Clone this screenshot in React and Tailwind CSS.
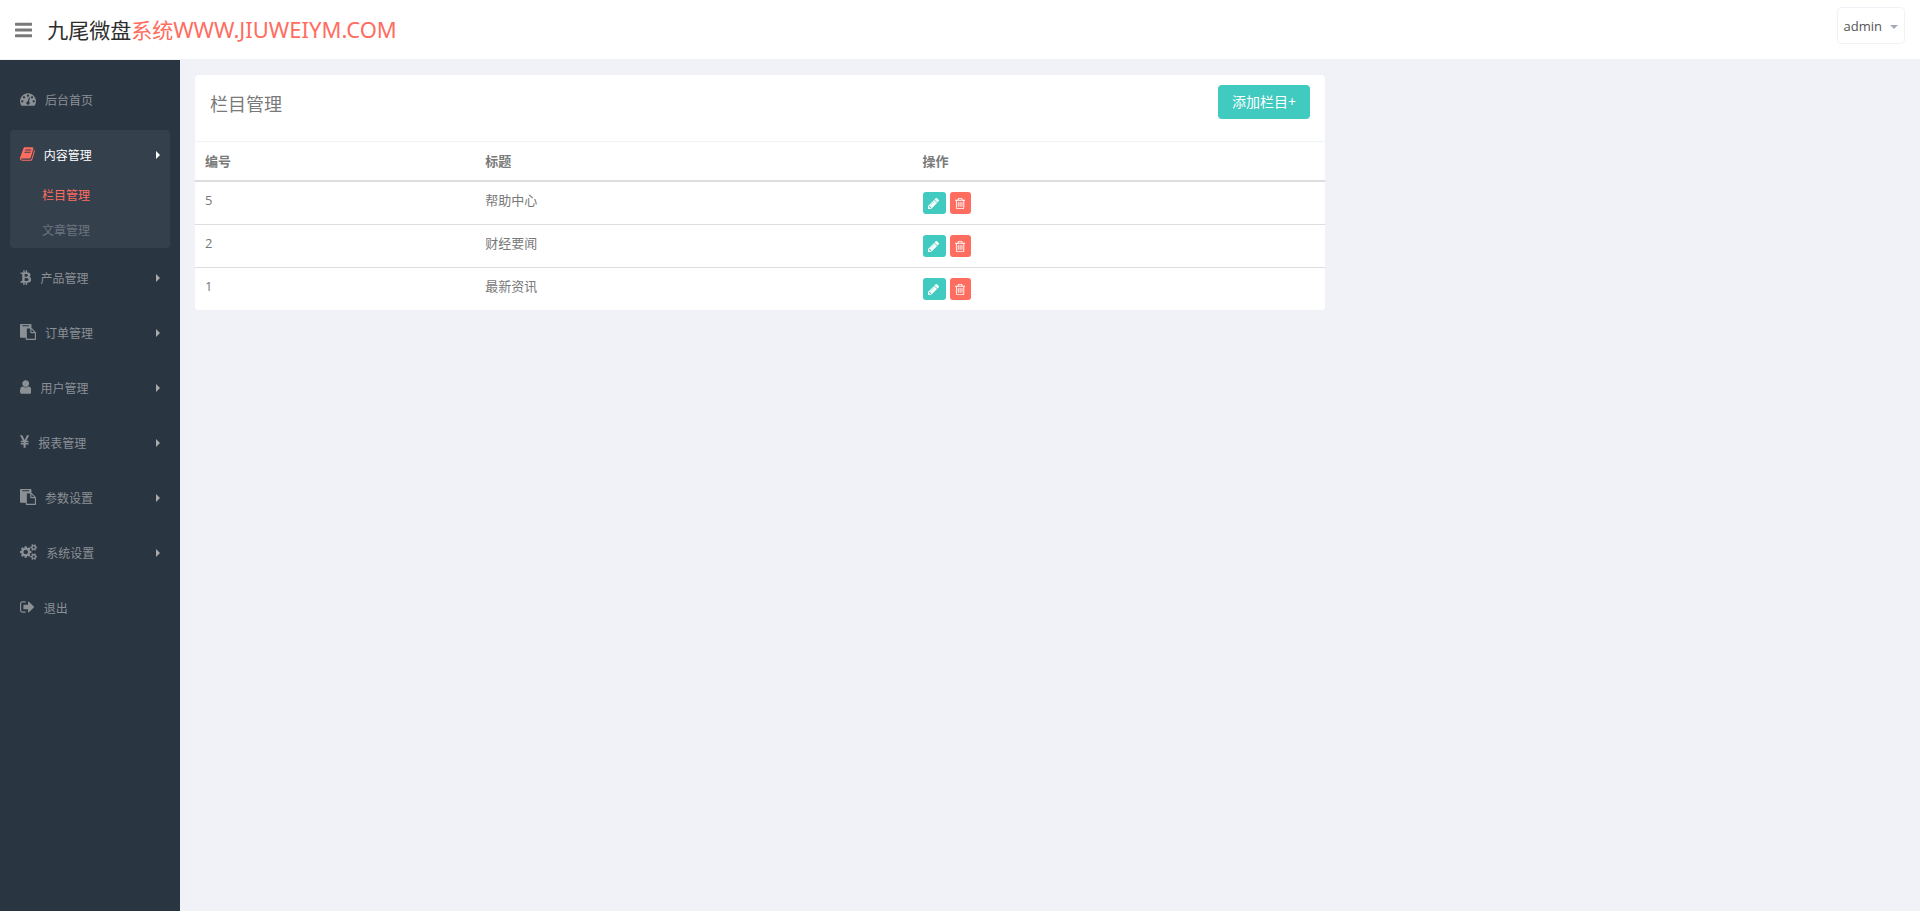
import React, { useState } from "react";

const icons = {
  bars: {
    box: "128 0 1536 1792",
    d: "M1664 1344v128q0 26-19 45t-45 19h-1408q-26 0-45-19t-19-45v-128q0-26 19-45t45-19h1408q26 0 45 19t19 45zm0-512v128q0 26-19 45t-45 19h-1408q-26 0-45-19t-19-45v-128q0-26 19-45t45-19h1408q26 0 45 19t19 45zm0-512v128q0 26-19 45t-45 19h-1408q-26 0-45-19t-19-45v-128q0-26 19-45t45-19h1408q26 0 45 19t19 45z",
  },
  dashboard: {
    box: "0 0 1792 1792",
    d: "M384 1152q0-53-37.5-90.5t-90.5-37.5-90.5 37.5-37.5 90.5 37.5 90.5 90.5 37.5 90.5-37.5 37.5-90.5zm192-448q0-53-37.5-90.5t-90.5-37.5-90.5 37.5-37.5 90.5 37.5 90.5 90.5 37.5 90.5-37.5 37.5-90.5zm428 481l101-382q6-26-7.5-48.5t-38.5-29.5-48 6.5-30 39.5l-101 382q-60 5-107 43.5t-63 98.5q-20 77 20 146t117 89 146-20 89-117q16-60-6-117t-72-91zm660-33q0-53-37.5-90.5t-90.5-37.5-90.5 37.5-37.5 90.5 37.5 90.5 90.5 37.5 90.5-37.5 37.5-90.5zm-640-640q0-53-37.5-90.5t-90.5-37.5-90.5 37.5-37.5 90.5 37.5 90.5 90.5 37.5 90.5-37.5 37.5-90.5zm448 192q0-53-37.5-90.5t-90.5-37.5-90.5 37.5-37.5 90.5 37.5 90.5 90.5 37.5 90.5-37.5 37.5-90.5zm320 448q0 261-141 483-19 29-54 29h-1402q-35 0-54-29-141-221-141-483 0-182 71-348t191-286 286-191 348-71 348 71 286 191 191 286 71 348z",
  },
  book: {
    box: "64 0 1664 1792",
    d: "M1703 478q40 57 18 129l-275 906q-19 64-76.5 107.5t-122.5 43.5h-923q-77 0-148.5-53.5t-99.5-131.5q-24-67-2-127 0-4 3-27t4-37q1-8-3-21.5t-3-19.5q2-11 8-21t16.5-23.5 16.5-23.5q23-38 45-91.5t30-91.5q3-10 .5-30t-.5-28q3-11 17-28t17-23q21-36 42-92t25-90q1-9-2.5-32t.5-28q4-13 22-30.5t22-22.5q19-26 42.5-84.5t27.5-96.5q1-8-3-25.5t-2-26.5q2-8 9-18t18-23 17-21q8-12 16.5-30.5t15-35 16-36 19.5-32 26.5-23.5 36-11.5 47.5 5.5l-1 3q38-9 51-9h761q74 0 114 56t18 130l-274 906q-36 119-71.5 153.5t-128.5 34.5h-869q-27 0-38 15-11 16-1 43 24 70 144 70h923q29 0 56-15.5t35-41.5l300-987q7-22 5-57 38 15 59 43zm-1064 2q-4 13 2 22.5t20 9.5h608q13 0 25.5-9.5t16.5-22.5l21-64q4-13-2-22.5t-20-9.5h-608q-13 0-25.5 9.5t-16.5 22.5zm-83 256q-4 13 2 22.5t20 9.5h608q13 0 25.5-9.5t16.5-22.5l21-64q4-13-2-22.5t-20-9.5h-608q-13 0-25.5 9.5t-16.5 22.5z",
  },
  bitcoin: {
    box: "50 73 1280 1792",
    d: "M1217 713q18 182-131 258 117 28 175 103t45 214q-7 71-32.5 125t-64.5 89-97 58.5-121.5 34.5-145.5 15v255h-154v-251q-80 0-122-1v252h-154v-255q-18 0-54-.5t-55-.5h-200l31-183h111q50 0 58-51v-402h16q-6-1-16-1v-287q-13-68-89-68h-111v-164l212 1q64 0 97-1v-252h154v247q82-2 122-2v-245h154v252q79 7 140 22.5t113 45 82.5 78 36.5 114.5zm-215 545q0-36-15-64t-37-46-57.5-30.5-65.5-18.5-74-9-69-3-64.5 1-47.5 1v338q8 0 37 .5t48 .5 53-1.5 58.5-4 57-8.5 55.5-14 47.5-21 39.5-30 24.5-40 9.5-51zm-71-476q0-33-12.5-58.5t-30.5-42-48-28-55-16.5-61.5-8-58-2.5-54 1-39.5.5v307q5 0 34.5.5t46.5 0 50-2 55-5.5 51.5-11 48.5-18.5 37-27 27-38.5 9-51z",
  },
  paste: {
    box: "0 0 1792 1792",
    d: "M768 1664h896v-640h-416q-40 0-68-28t-28-68v-416h-384v1152zm256-1440v-64q0-13-9.5-22.5t-22.5-9.5h-704q-13 0-22.5 9.5t-9.5 22.5v64q0 13 9.5 22.5t22.5 9.5h704q13 0 22.5-9.5t9.5-22.5zm256 672h299l-299-299v299zm512 128v672q0 40-28 68t-68 28h-960q-40 0-68-28t-28-68v-160h-544q-40 0-68-28t-28-68v-1344q0-40 28-68t68-28h1088q40 0 68 28t28 68v328q21 13 36 28l408 408q28 28 48 76t20 88z",
  },
  user: {
    box: "256 0 1280 1792",
    d: "M1536 1399q0 109-62.5 187t-150.5 78h-854q-88 0-150.5-78t-62.5-187q0-85 8.5-160.5t31.5-152 58.5-131 94-89 134.5-34.5q131 128 313 128t313-128q76 0 134.5 34.5t94 89 58.5 131 31.5 152 8.5 160.5zm-256-887q0 159-112.5 271.5t-271.5 112.5-271.5-112.5-112.5-271.5 112.5-271.5 271.5-112.5 271.5 112.5 112.5 271.5z",
  },
  yen: {
    box: "382 0 1027 1792",
    d: "M985.5 1536h-172q-13 0-22.5-9t-9.5-23v-330h-288q-13 0-22.5-9t-9.5-23v-103q0-13 9.5-22.5t22.5-9.5h288v-85h-288q-13 0-22.5-9t-9.5-23v-104q0-13 9.5-22.5t22.5-9.5h214l-321-578q-8-16 0-32 10-16 28-16h194q19 0 29 18l215 425q19 38 56 125 10-24 30.5-68t27.5-61l191-420q8-19 29-19h191q17 0 27 16 9 14 1 31l-313 579h215q13 0 22.5 9.5t9.5 22.5v104q0 14-9.5 23t-22.5 9h-290v85h290q13 0 22.5 9.5t9.5 22.5v103q0 14-9.5 23t-22.5 9h-290v330q0 13-9.5 22.5t-22.5 9.5z",
  },
  cogs: {
    box: "-64 0 1920 1792",
    d: "M832 896q0-106-75-181t-181-75-181 75-75 181 75 181 181 75 181-75 75-181zm768 512q0-52-38-90t-90-38-90 38-38 90q0 53 37.5 90.5t90.5 37.5 90.5-37.5 37.5-90.5zm0-1024q0-52-38-90t-90-38-90 38-38 90q0 53 37.5 90.5t90.5 37.5 90.5-37.5 37.5-90.5zm-384 421v185q0 10-7 19.5t-16 10.5l-155 24q-11 35-32 76 34 48 90 115 7 11 7 20 0 12-7 19-23 30-82.5 89.5t-78.5 59.5q-11 0-21-7l-115-90q-37 19-77 31-11 108-23 155-7 24-30 24h-186q-11 0-20-7.5t-10-17.5l-23-153q-34-10-75-31l-118 89q-7 7-20 7-11 0-21-8-144-133-144-160 0-9 7-19 10-14 41-53t47-61q-23-44-35-82l-152-24q-10-1-17-9.5t-7-19.5v-185q0-10 7-19.5t16-10.5l155-24q11-35 32-76-34-48-90-115-7-11-7-20 0-12 7-20 22-30 82-89t79-59q11 0 21 7l115 90q34-18 77-32 11-108 23-154 7-24 30-24h186q11 0 20 7.5t10 17.5l23 153q34 10 75 31l118-89q8-7 20-7 11 0 21 8 144 133 144 160 0 8-7 19-12 16-42 54t-45 60q23 48 34 82l152 23q10 2 17 10.5t7 19.5zm640 533v140q0 16-149 31-12 27-30 52 51 113 51 138 0 4-4 7-122 71-124 71-8 0-46-47t-52-68q-20 2-30 2t-30-2q-14 21-52 68t-46 47q-2 0-124-71-4-3-4-7 0-25 51-138-18-25-30-52-149-15-149-31v-140q0-16 149-31 13-29 30-52-51-113-51-138 0-4 4-7 4-2 35-20t59-34 30-16q8 0 46 46.5t52 67.5q20-2 30-2t30 2q51-71 92-112l6-2q4 0 124 70 4 3 4 7 0 25-51 138 17 23 30 52 149 15 149 31zm0-1024v140q0 16-149 31-12 27-30 52 51 113 51 138 0 4-4 7-122 71-124 71-8 0-46-47t-52-68q-20 2-30 2t-30-2q-14 21-52 68t-46 47q-2 0-124-71-4-3-4-7 0-25 51-138-18-25-30-52-149-15-149-31v-140q0-16 149-31 13-29 30-52-51-113-51-138 0-4 4-7 4-2 35-20t59-34 30-16q8 0 46 46.5t52 67.5q20-2 30-2t30 2q51-71 92-112l6-2q4 0 124 70 4 3 4 7 0 25-51 138 17 23 30 52 149 15 149 31z",
  },
  signOut: {
    box: "64 0 1664 1792",
    d: "M704 1440q0 4 1 20t.5 26.5-3 23.5-10 19.5-20.5 6.5h-320q-119 0-203.5-84.5t-84.5-203.5v-704q0-119 84.5-203.5t203.5-84.5h320q13 0 22.5 9.5t9.5 22.5q0 4 1 20t.5 26.5-3 23.5-10 19.5-20.5 6.5h-320q-66 0-113 47t-47 113v704q0 66 47 113t113 47h312l11.5 1 11.5 3 8 5.5 7 9 2 13.5zm928-544q0 26-19 45l-544 544q-19 19-45 19t-45-19-19-45v-288h-448q-26 0-45-19t-19-45v-384q0-26 19-45t45-19h448v-288q0-26 19-45t45-19 45 19l544 544q19 19 19 45z",
  },
  pencil: {
    box: "128 0 1536 1792",
    d: "M491 1536l91-91-235-235-91 91v107h128v128h107zm523-928q0-22-22-22-10 0-17 7l-542 542q-7 7-7 17 0 22 22 22 10 0 17-7l542-542q7-7 7-17zm-54-192l416 416-832 832h-416v-416zm683 96q0 53-37 90l-166 166-416-416 166-165q36-38 90-38 53 0 91 38l235 234q37 39 37 91z",
  },
  trash: {
    box: "192 0 1408 1792",
    d: "M704 736v576q0 14-9 23t-23 9h-64q-14 0-23-9t-9-23v-576q0-14 9-23t23-9h64q14 0 23 9t9 23zm256 0v576q0 14-9 23t-23 9h-64q-14 0-23-9t-9-23v-576q0-14 9-23t23-9h64q14 0 23 9t9 23zm256 0v576q0 14-9 23t-23 9h-64q-14 0-23-9t-9-23v-576q0-14 9-23t23-9h64q14 0 23 9t9 23zm128 724v-948h-896v948q0 22 7 40.5t14.5 27 10.5 8.5h832q3 0 10.5-8.5t14.5-27 7-40.5zm-672-1076h448l-48-117q-7-9-17-11h-317q-10 2-17 11zm928 32v64q0 14-9 23t-23 9h-96v948q0 83-47 143.5t-113 60.5h-832q-66 0-113-58.5t-47-141.5v-952h-96q-14 0-23-9t-9-23v-64q0-14 9-23t23-9h309l70-167q15-37 54-63t79-26h320q40 0 79 26t54 63l70 167h309q14 0 23 9t9 23z",
  },
};

const Icon = ({ name, className }) => (
  <svg viewBox={icons[name].box} className={className} fill="currentColor" aria-hidden="true">
    <path d={icons[name].d} />
  </svg>
);

const menu = [
  { id: "home", icon: "dashboard", label: "后台首页" },
  {
    id: "content",
    icon: "book",
    label: "内容管理",
    children: ["栏目管理", "文章管理"],
  },
  { id: "goods", icon: "bitcoin", label: "产品管理", children: [] },
  { id: "order", icon: "paste", label: "订单管理", children: [] },
  { id: "user", icon: "user", label: "用户管理", children: [] },
  { id: "report", icon: "yen", label: "报表管理", children: [] },
  { id: "params", icon: "paste", label: "参数设置", children: [] },
  { id: "system", icon: "cogs", label: "系统设置", children: [] },
  { id: "logout", icon: "signOut", label: "退出" },
];

const rows = [
  { id: 5, title: "帮助中心" },
  { id: 2, title: "财经要闻" },
  { id: 1, title: "最新资讯" },
];

const Header = ({ onToggle }) => (
  <header className="flex h-[60px] items-start justify-between border-b border-[#f1f2f7] bg-white px-[15px]">
    <div className="flex h-[59px] items-center gap-[15px]">
      <button type="button" onClick={onToggle} title="Toggle Navigation" className="text-[#797979]">
        <Icon name="bars" className="h-5 w-auto" />
      </button>
      <a href="#" className="text-[21px] leading-[30px] text-[#2e2e2e]">
        九尾微盘
        <span className="text-[#ff6c60]">
          系统<span className="font-['Noto_Sans',sans-serif] text-[22px]">WWW.JIUWEIYM.COM</span>
        </span>
      </a>
    </div>
    <button
      type="button"
      className="mt-[7px] flex h-[37px] items-center gap-2 rounded border border-[#f1f2f7] px-[6px] pt-[2px] text-[13px] text-[#555]"
    >
      admin
      <svg viewBox="0 0 8 4" className="h-1 w-2" fill="#a4aaba" aria-hidden="true">
        <path d="M0 0h8L4 4z" />
      </svg>
    </button>
  </header>
);

const MenuItem = ({ item, active, onClick }) => (
  <li className={active ? "rounded bg-[#35404d]" : ""}>
    <a
      href="#"
      onClick={onClick}
      className={`flex h-[50px] items-center px-[10px] text-xs ${active ? "text-white" : "text-[#8b9095]"}`}
    >
      <Icon name={item.icon} className={`mr-[9px] mb-[2px] h-4 w-auto ${active ? "text-[#ff6c60]" : ""}`} />
      <span className="flex-1 pt-[2px]">{item.label}</span>
      {item.children && (
        <svg viewBox="0 0 4 8" className={`h-2 w-1 ${active ? "" : "text-[#aaa]"}`} fill="currentColor" aria-hidden="true">
          <path d="M0 0l4 4-4 4z" />
        </svg>
      )}
    </a>
    {active && (
      <ul className="-mt-[2px]">
        {item.children.map((label, i) => (
          <li key={label}>
            <a
              href="#"
              className={`flex h-[35px] items-center pl-8 text-xs ${i === 0 ? "text-[#ff6c60]" : "text-[#6b747d]"}`}
            >
              {label}
            </a>
          </li>
        ))}
      </ul>
    )}
  </li>
);

const Sidebar = () => {
  const [open, setOpen] = useState("content");
  return (
    <aside className="w-[180px] shrink-0 bg-[#2a3542] px-[10px] pt-[15px]">
      <ul className="flex flex-col gap-[5px]">
        {menu.map((item) => (
          <MenuItem
            key={item.id}
            item={item}
            active={open === item.id}
            onClick={() => item.children && setOpen(item.id)}
          />
        ))}
      </ul>
    </aside>
  );
};

const ColumnPanel = () => (
  <section className="w-2/3 px-[15px]">
    <div className="rounded bg-white">
      <header className="flex h-[67px] items-start justify-between border-b border-[#eff2f7] px-[15px] pt-[10px]">
        <h1 className="text-lg leading-[38px] text-[#797979]">栏目管理</h1>
        <button type="button" className="h-[34px] rounded bg-[#41cac0] px-[14px] text-sm text-white">
          添加栏目+
        </button>
      </header>
      <table className="w-full table-fixed text-left text-[13px] leading-[18px] text-[#797979]">
        <colgroup>
          <col className="w-[24.8%]" />
          <col className="w-[38.7%]" />
          <col />
        </colgroup>
        <thead>
          <tr className="border-b-2 border-[#ddd]">
            <th className="p-[10px] font-bold">编号</th>
            <th className="p-[10px] font-bold">标题</th>
            <th className="p-[10px] font-bold">操作</th>
          </tr>
        </thead>
        <tbody>
          {rows.map((row) => (
            <tr key={row.id} className="border-b border-[#ddd] align-top last:border-b-0">
              <td className="px-[10px] py-[9px]">{row.id}</td>
              <td className="px-[10px] py-[9px]">{row.title}</td>
              <td className="p-[10px]">
                <div className="flex gap-1">
                  <button
                    type="button"
                    title="编辑"
                    className="flex h-[22px] w-[23px] items-center justify-center rounded-[3px] bg-[#41cac0] text-white"
                  >
                    <Icon name="pencil" className="h-[13px] w-auto" />
                  </button>
                  <button
                    type="button"
                    title="删除"
                    className="flex h-[22px] w-[21px] items-center justify-center rounded-[3px] bg-[#ff6c60] text-white"
                  >
                    <Icon name="trash" className="h-[13px] w-auto" />
                  </button>
                </div>
              </td>
            </tr>
          ))}
        </tbody>
      </table>
    </div>
  </section>
);

const App = () => {
  const [showSidebar, setShowSidebar] = useState(true);
  return (
    <div className="flex min-h-screen flex-col bg-[#f1f2f7] font-['Open_Sans','Noto_Sans_CJK_SC',sans-serif]">
      <Header onToggle={() => setShowSidebar(!showSidebar)} />
      <div className="flex flex-1">
        {showSidebar && <Sidebar />}
        <main className="flex-1 pt-[15px]">
          <ColumnPanel />
        </main>
      </div>
    </div>
  );
};

export default App;
